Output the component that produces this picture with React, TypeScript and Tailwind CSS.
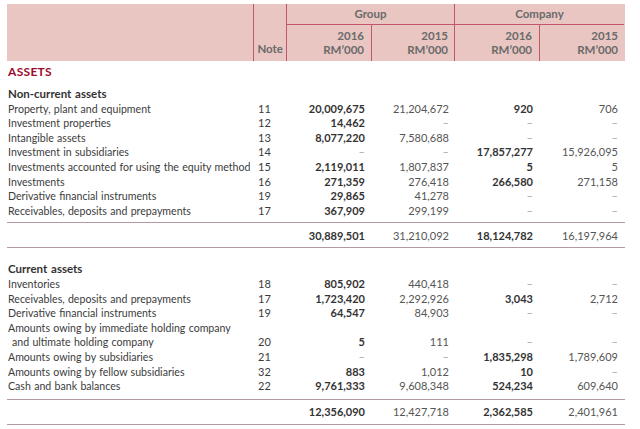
const cols = "grid grid-cols-[247px_33px_85px_83px_85px_84px]";

type Row = { label: string[]; note: string; v: string[] };

const nonCurrent: Row[] = [
  { label: ["Property, plant and equipment"], note: "11", v: ["20,009,675", "21,204,672", "920", "706"] },
  { label: ["Investment properties"], note: "12", v: ["14,462", "–", "–", "–"] },
  { label: ["Intangible assets"], note: "13", v: ["8,077,220", "7,580,688", "–", "–"] },
  { label: ["Investment in subsidiaries"], note: "14", v: ["–", "–", "17,857,277", "15,926,095"] },
  { label: ["Investments accounted for using the equity method"], note: "15", v: ["2,119,011", "1,807,837", "5", "5"] },
  { label: ["Investments"], note: "16", v: ["271,359", "276,418", "266,580", "271,158"] },
  { label: ["Derivative financial instruments"], note: "19", v: ["29,865", "41,278", "–", "–"] },
  { label: ["Receivables, deposits and prepayments"], note: "17", v: ["367,909", "299,199", "–", "–"] },
];

const current: Row[] = [
  { label: ["Inventories"], note: "18", v: ["805,902", "440,418", "–", "–"] },
  { label: ["Receivables, deposits and prepayments"], note: "17", v: ["1,723,420", "2,292,926", "3,043", "2,712"] },
  { label: ["Derivative financial instruments"], note: "19", v: ["64,547", "84,903", "–", "–"] },
  {
    label: ["Amounts owing by immediate holding company", "and ultimate holding company"],
    note: "20",
    v: ["5", "111", "–", "–"],
  },
  { label: ["Amounts owing by subsidiaries"], note: "21", v: ["–", "–", "1,835,298", "1,789,609"] },
  { label: ["Amounts owing by fellow subsidiaries"], note: "32", v: ["883", "1,012", "10", "–"] },
  { label: ["Cash and bank balances"], note: "22", v: ["9,761,333", "9,608,348", "524,234", "609,640"] },
];

const Value = ({ value, bold, last }: { value: string; bold: boolean; last?: boolean }) => {
  const pad = last ? "pr-[6px]" : "pr-[7px]";
  if (value === "–")
    return <div className={`text-right text-[#a8a8a8] ${pad}`}>–</div>;
  return (
    <div className={`text-right ${pad} ${bold ? "font-bold text-[#333]" : "text-[#555]"}`}>
      {value}
    </div>
  );
};

const DataRow = ({ row }: { row: Row }) => (
  <div className={`${cols} items-end`}>
    <div className="pl-px text-[10.6px] whitespace-nowrap [word-spacing:0.6px]">
      {row.label.map((l, i) => (
        <div key={i} className={`h-[14.6px] leading-[14.6px] ${i > 0 ? "pl-[4px]" : ""}`}>
          {l}
        </div>
      ))}
    </div>
    <div className="h-[14.6px] pl-[4px] leading-[14.6px]">{row.note}</div>
    {row.v.map((v, i) => (
      <div key={i} className="h-[14.6px] leading-[14.6px]">
        <Value value={v} bold={i % 2 === 0} last={i % 2 === 1} />
      </div>
    ))}
  </div>
);

const TotalRow = ({ v }: { v: string[] }) => (
  <div className={`${cols} h-[26px] items-center border-y border-[#b39aa0] leading-none`}>
    <div />
    <div />
    {v.map((x, i) => (
      <Value key={i} value={x} bold={i % 2 === 0} last={i % 2 === 1} />
    ))}
  </div>
);

export default function App() {
  return (
    <div className="h-[429px] w-[640px] overflow-hidden bg-white pl-[7px] pt-[4px] font-['Lato',sans-serif] text-[11px] text-[#3c3c3c]">
      <div className="w-[618px]">
        {/* header band */}
        <div className={`${cols} h-[57px] bg-[#e9c6c2] text-[11.5px] font-bold text-[#6a6a6a]`}>
          <div className="border-r border-[#c2566b]" />
          <div className="flex items-end justify-end border-r border-[#c2566b] pb-[4px] pr-[3px]">Note</div>
          <div className="col-span-4 grid grid-rows-[21px_36px]">
            <div className="grid grid-cols-[168px_169px] border-b border-[#c2566b]">
              <div className="flex items-center justify-center border-r border-[#c2566b]">Group</div>
              <div className="flex items-center justify-center">Company</div>
            </div>
            <div className="grid grid-cols-[85px_83px_85px_84px]">
              {["2016", "2015", "2016", "2015"].map((y, i) => (
                <div
                  key={i}
                  className={`flex flex-col items-end justify-center leading-[14px] ${i < 3 ? "border-r border-[#c2566b]" : ""} ${i % 2 === 1 ? "pr-[6px]" : "pr-[7px]"}`}
                >
                  <span>{y}</span>
                  <span>RM’000</span>
                </div>
              ))}
            </div>
          </div>
        </div>

        <div className="flex h-[22px] items-center pl-px text-[12px] font-bold tracking-[0.3px] text-[#9c0a2c]">
          ASSETS
        </div>

        <div className="mt-[4px] h-[14.6px] pl-px text-[11.5px] font-bold leading-[14.6px] text-[#333] [word-spacing:1px]">
          Non-current assets
        </div>
        {nonCurrent.map((r, i) => (
          <DataRow key={i} row={r} />
        ))}
        <div className="mt-[4px]">
          <TotalRow v={["30,889,501", "31,210,092", "18,124,782", "16,197,964"]} />
        </div>

        <div className="mt-[14px] h-[14.6px] pl-px text-[11.5px] font-bold leading-[14.6px] text-[#333] [word-spacing:1px]">
          Current assets
        </div>
        {current.map((r, i) => (
          <DataRow key={i} row={r} />
        ))}
        <div className="mt-[5px]">
          <TotalRow v={["12,356,090", "12,427,718", "2,362,585", "2,401,961"]} />
        </div>
      </div>
    </div>
  );
}
